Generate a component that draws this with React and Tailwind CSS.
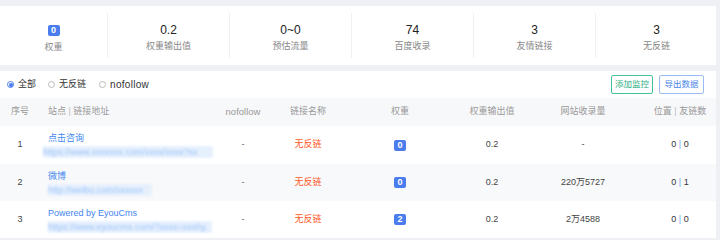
import React from "react";

const font = { fontFamily: '"Liberation Sans", "Noto Sans CJK SC", sans-serif' };

function Badge({ v }) {
  return (
    <span className="inline-flex h-[11px] min-w-[12px] items-center justify-center rounded-[2px] bg-[#4a7ced] px-[2px] text-[9px] font-bold leading-none text-white">
      {v}
    </span>
  );
}

const stats = [
  { n: <Badge v="0" />, l: "权重" },
  { n: "0.2", l: "权重输出值" },
  { n: "0~0", l: "预估流量" },
  { n: "74", l: "百度收录" },
  { n: "3", l: "友情链接" },
  { n: "3", l: "无反链" },
];

const rows = [
  { i: "1", t: "点击咨询", u: "https://www.xxxxxxx.com/xxxx/xxxx?xx", w: "w-[170px] -ml-[5px]", ip: "0", sl: "-", pos: "0", fr: "0", bg: "bg-white" },
  { i: "2", t: "微博", u: "http://weibo.com/xxxxxx", w: "w-[104px]", ip: "0", sl: "220万5727", pos: "0", fr: "1", bg: "bg-[#f8f9fb]" },
  { i: "3", t: "Powered by EyouCms", u: "https://www.eyoucms.com/?xxxx=xxxhy.", w: "w-[164px]", ip: "2", sl: "2万4588", pos: "0", fr: "0", bg: "bg-white" },
];

const cols = "grid grid-cols-[40px_175px_56px_74px_110px_74px_108px_79px]";

export default function App() {
  return (
    <div style={font} className="h-[240px] w-[720px] overflow-hidden bg-[#eef0f4] pt-[6px]">
      <div className="mr-[4px] grid h-[59px] grid-cols-[107px_repeat(5,122px)] items-center bg-white">
        {stats.map((s, k) => (
          <div
            key={k}
            className={`flex h-[45px] flex-col items-center justify-center ${k > 0 ? "border-l border-[#eef0f3]" : ""} ${k === 0 ? "pt-[2px]" : ""}`}
          >
            <div className="flex h-[18px] items-center text-[12px] leading-none text-[#222]">{s.n}</div>
            <div className="mt-[3px] text-[9px] leading-none text-[#888]">{s.l}</div>
          </div>
        ))}
      </div>

      <div className="mr-[4px] mt-[6px] bg-white">
        <div className="flex h-[27px] items-center pl-[7px] pr-[12px]">
          <div className="flex items-center gap-[4px] text-[9px] text-[#333]">
            <span className="flex h-[7px] w-[7px] items-center justify-center rounded-full border border-[#4a7ced]">
              <span className="h-[4px] w-[4px] rounded-full bg-[#4a7ced]" />
            </span>
            <span className="pt-[1px]">全部</span>
          </div>
          <div className="ml-[12px] flex items-center gap-[4px] text-[9px] text-[#333]">
            <span className="h-[7px] w-[7px] rounded-full border border-[#bbb]" />
            <span className="pt-[1px]">无反链</span>
          </div>
          <div className="ml-[13px] flex items-center gap-[4px] text-[10px] tracking-[0.3px] text-[#333]">
            <span className="h-[7px] w-[7px] rounded-full border border-[#bbb]" />
            <span>nofollow</span>
          </div>
          <div className="ml-auto flex items-center gap-[6px]">
            <button className="flex h-[19px] w-[42px] items-center justify-center rounded-[2px] border border-[#44c198] text-[8.5px] text-[#2fae84]">
              添加监控
            </button>
            <button className="flex h-[19px] w-[45px] items-center justify-center rounded-[2px] border border-[#9bbcf2] text-[8.5px] text-[#4a86e8]">
              导出数据
            </button>
          </div>
        </div>

        <div className={`${cols} h-[28px] items-center bg-[#f7f8fa] text-[9px] text-[#999]`}>
          <div className="text-center">序号</div>
          <div className="pl-[8px]">
            站点 <span className="text-[#bbb]">|</span> 链接地址
          </div>
          <div className="text-center text-[9.5px]">nofollow</div>
          <div className="text-center">链接名称</div>
          <div className="text-center">权重</div>
          <div className="text-center">权重输出值</div>
          <div className="text-center">网站收录量</div>
          <div className="pl-[7px] text-center">
            位置 <span className="text-[#bbb]">|</span> 友链数
          </div>
        </div>

        {rows.map((r, k) => (
          <div key={k} className={`${cols} ${k === 0 ? "h-[38px]" : "h-[37px]"} items-center ${r.bg} text-[9px] text-[#444]`}>
            <div className="text-center">{r.i}</div>
            <div className="flex flex-col pl-[8px]">
              <div className="text-[9px] leading-[13px] text-[#3f86f0]">{r.t}</div>
              <div className={`${r.w} mt-[1px] whitespace-nowrap rounded-[2px] bg-[#e6f0fd] text-[9px] leading-[12px] text-[#9fc5f7] blur-[1px]`}>
                {r.u}
              </div>
            </div>
            <div className="text-center text-[#666]">-</div>
            <div className="text-center text-[#ff5a26]">无反链</div>
            <div className="flex justify-center">
              <Badge v={r.ip} />
            </div>
            <div className="text-center">0.2</div>
            <div className="text-center">{r.sl}</div>
            <div className="pl-[7px] text-center text-[#333]">
              {r.pos} <span className="text-[#6fa0ee]">|</span> {r.fr}
            </div>
          </div>
        ))}
      </div>
    </div>
  );
}
